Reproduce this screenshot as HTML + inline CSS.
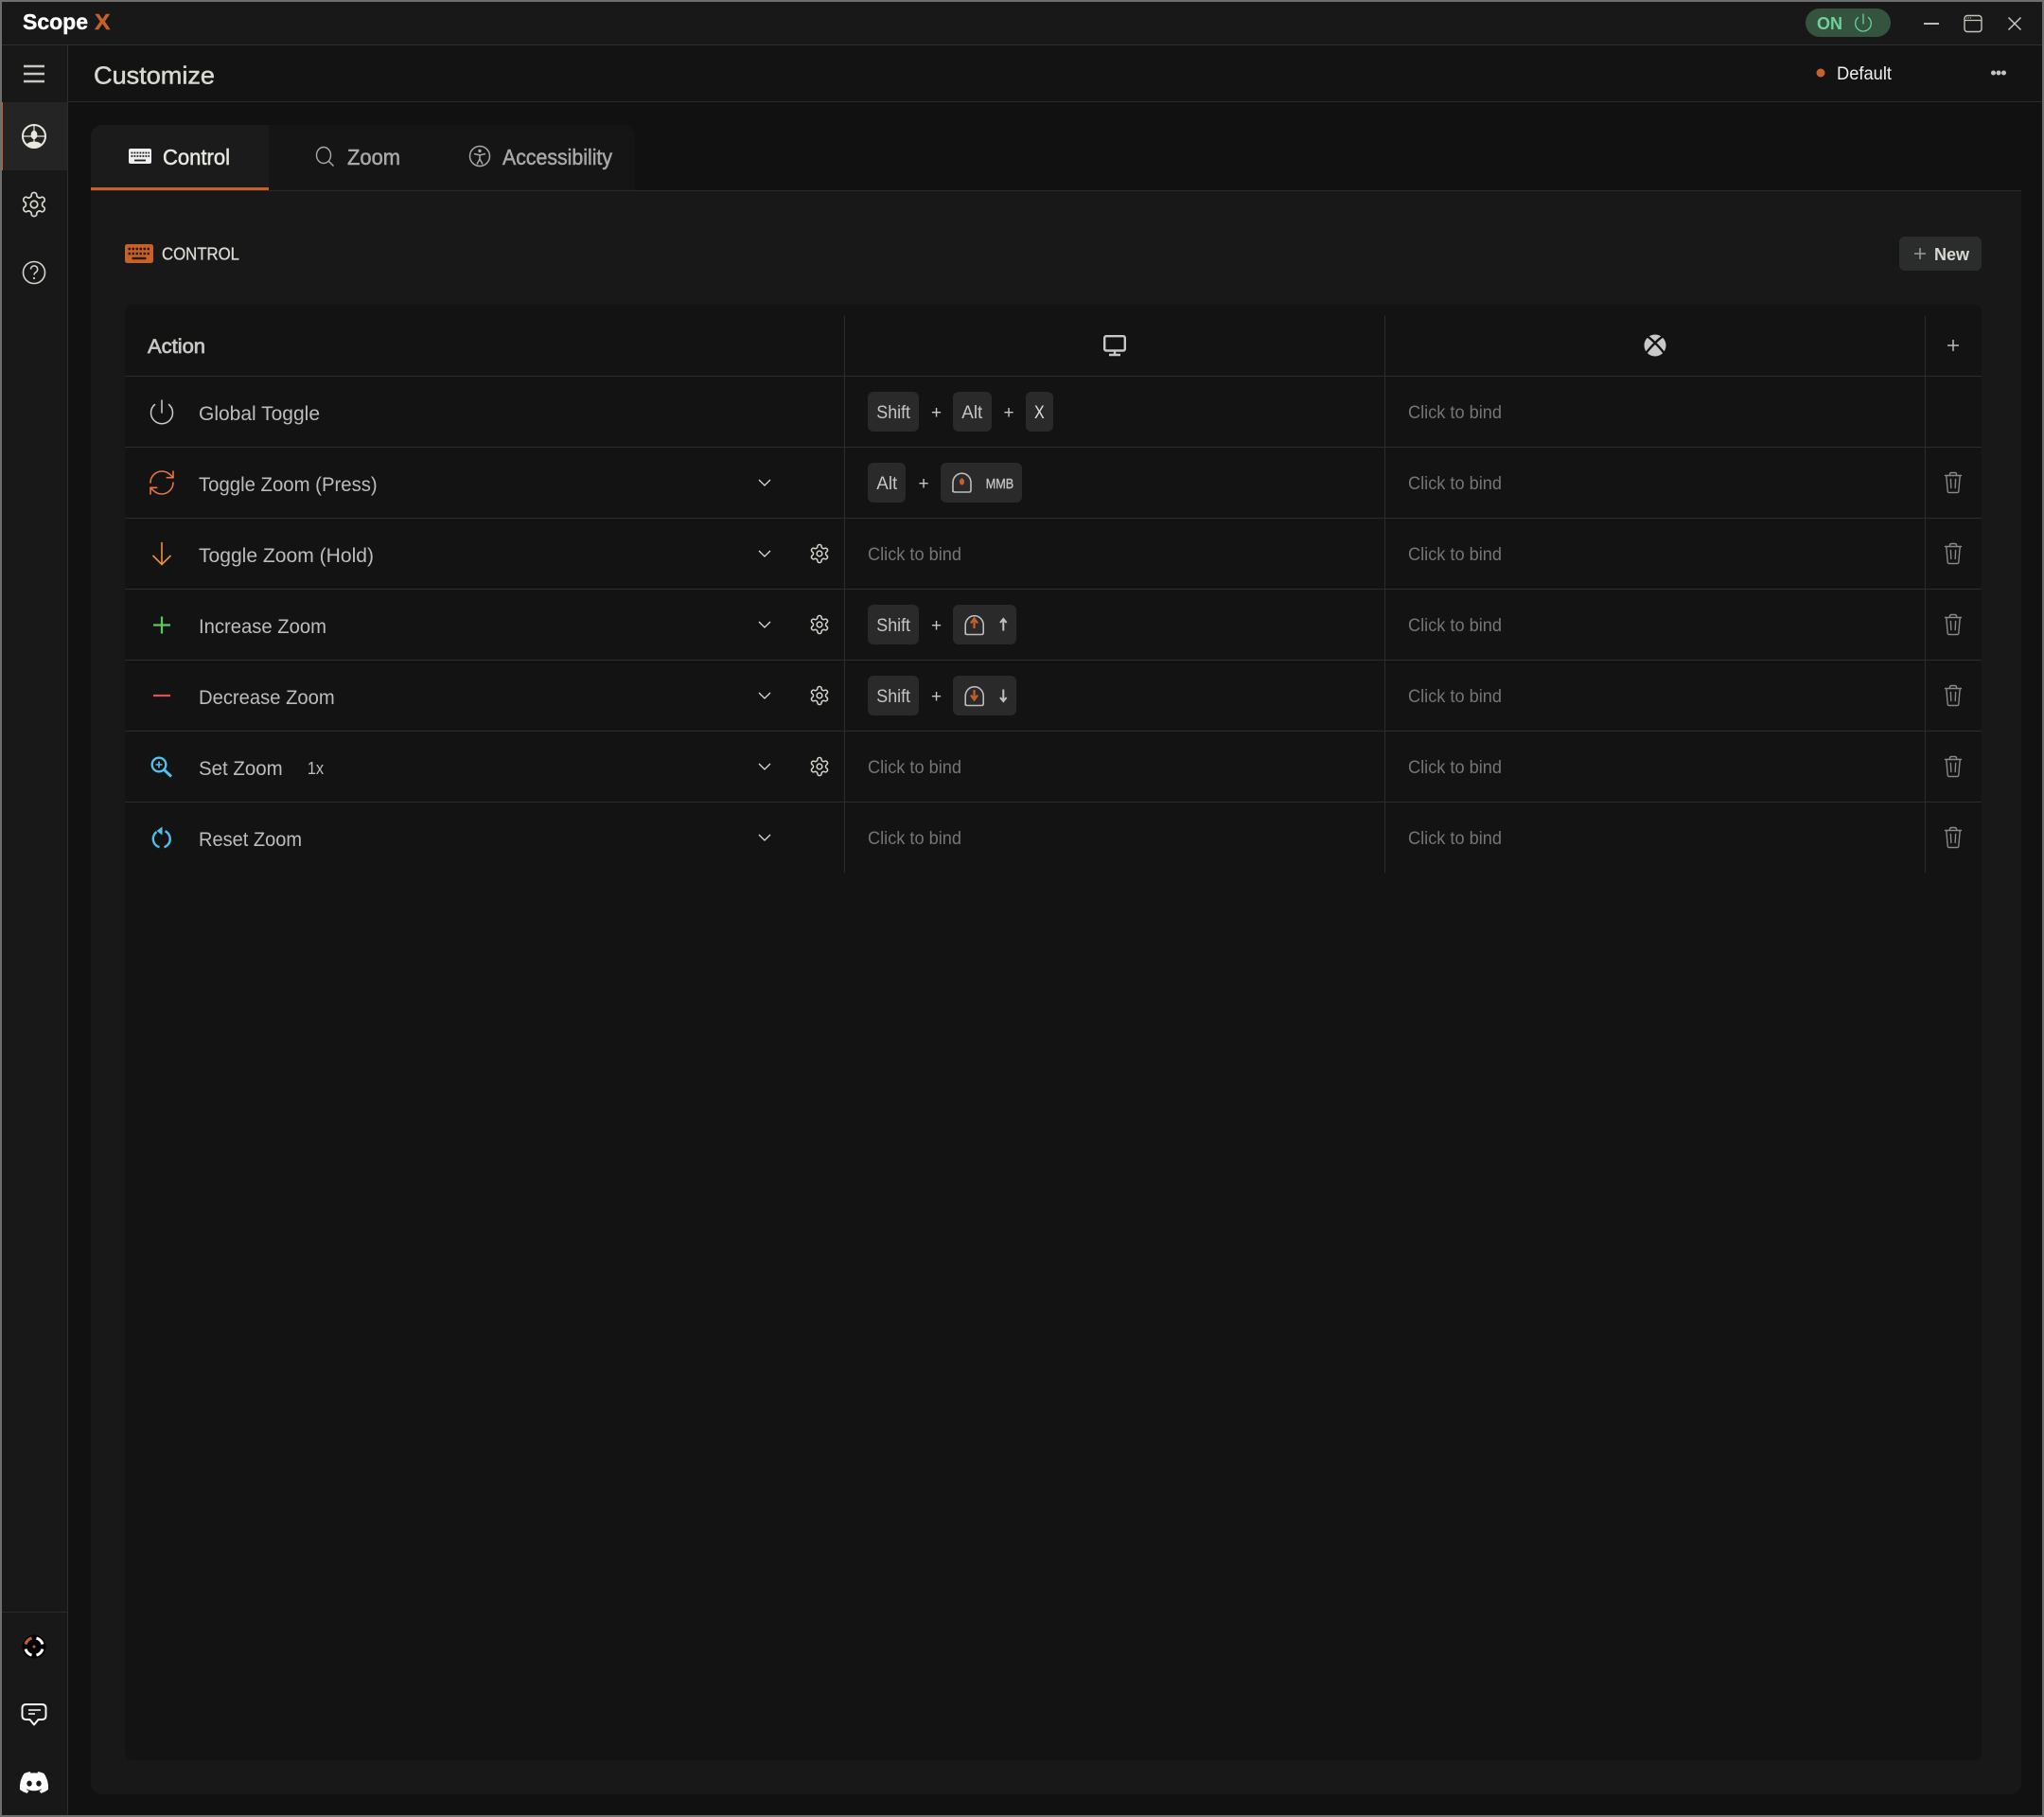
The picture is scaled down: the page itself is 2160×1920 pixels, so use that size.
<!DOCTYPE html>
<html>
<head>
<meta charset="utf-8">
<title>Scope X - Customize</title>
<style>
html,body{margin:0;padding:0;background:#111;width:2160px;height:1920px;overflow:hidden}
svg{display:block}
text{font-family:"Liberation Sans",sans-serif}
.name{font-size:21px;fill:#bcbcbc}
.key{font-size:19.5px;fill:#c6c6c6}
.bind{font-size:19.5px;fill:#757575}
.plus{font-size:19px;fill:#c6c6c6}
.tab{font-size:23px}
</style>
</head>
<body>
<svg width="2160" height="1920" viewBox="0 0 2160 1920" xmlns="http://www.w3.org/2000/svg">
<defs>
  <g id="gear" fill="none" stroke-linejoin="round">
    <path d="M12.22 2h-.44a2 2 0 0 0-2 2v.18a2 2 0 0 1-1 1.73l-.43.25a2 2 0 0 1-2 0l-.15-.08a2 2 0 0 0-2.73.73l-.22.38a2 2 0 0 0 .73 2.73l.15.1a2 2 0 0 1 1 1.72v.51a2 2 0 0 1-1 1.74l-.15.09a2 2 0 0 0-.73 2.73l.22.38a2 2 0 0 0 2.73.73l.15-.08a2 2 0 0 1 2 0l.43.25a2 2 0 0 1 1 1.73V20a2 2 0 0 0 2 2h.44a2 2 0 0 0 2-2v-.18a2 2 0 0 1 1-1.73l.43-.25a2 2 0 0 1 2 0l.15.08a2 2 0 0 0 2.73-.73l.22-.39a2 2 0 0 0-.73-2.73l-.15-.08a2 2 0 0 1-1-1.74v-.5a2 2 0 0 1 1-1.74l.15-.09a2 2 0 0 0 .73-2.73l-.22-.38a2 2 0 0 0-2.73-.73l-.15.08a2 2 0 0 1-2 0l-.43-.25a2 2 0 0 1-1-1.73V4a2 2 0 0 0-2-2z"/>
    <circle cx="12" cy="12" r="3"/>
  </g>
  <g id="trash" fill="none" stroke="#888" stroke-width="1.4" stroke-linecap="round" stroke-linejoin="round">
    <path d="M-8.5 -7.5H8.5"/>
    <path d="M-7.2 -7.5L-5.8 9.2Q-5.6 10.5 -4.4 10.5H4.4Q5.6 10.5 5.8 9.2L7.2 -7.5"/>
    <path d="M-3.6 -7.5V-8.5Q-3.6 -10.5 -1.6 -10.5H1.6Q3.6 -10.5 3.6 -8.5V-7.5"/>
    <path d="M-2.6 -3.5L-2.2 5.5M2.6 -3.5L2.2 5.5"/>
  </g>
  <path id="chev" d="M-6 -3L0 3L6 -3" fill="none" stroke="#dcdcdc" stroke-width="1.3"/>
  <g id="mouse">
    <path d="M-9.5 10V0A9.5 9.8 0 0 1 9.5 0V8Q9.5 10 7.5 10H-7.5Q-9.5 10 -9.5 8Z" fill="none" stroke="#bdbdbd" stroke-width="1.6"/>
  </g>
</defs>

<!-- window frame -->
<rect width="2160" height="1920" fill="#6e6e6e"/>
<rect x="2" y="2" width="2156" height="1916" fill="#111111"/>

<!-- title bar -->
<rect x="2" y="2" width="2156" height="45" fill="#181818"/>
<rect x="2" y="47" width="2156" height="1" fill="#2d2d2d"/>
<text x="24" y="31" font-size="23.5" font-weight="700" fill="#ffffff" stroke="#ffffff" stroke-width=".4" textLength="69" lengthAdjust="spacingAndGlyphs">Scope</text>
<text x="100" y="31" font-size="23.5" font-weight="700" fill="#c8602a" stroke="#c8602a" stroke-width=".4" textLength="16.5" lengthAdjust="spacingAndGlyphs">X</text>

<rect x="1908" y="9" width="90" height="30" rx="15" fill="#355440"/>
<text x="1920" y="31" font-size="18.5" font-weight="700" fill="#6fd09a" textLength="27" lengthAdjust="spacingAndGlyphs">ON</text>
<path d="M1963.5 18.5A8.3 8.3 0 1 0 1974.5 18.5M1969 15V25" fill="none" stroke="#6fd09a" stroke-width="1.3" stroke-linecap="round"/>

<rect x="2033" y="24" width="16" height="2" fill="#bdbdb5"/>
<rect x="2076" y="16.5" width="18" height="17" rx="3" fill="none" stroke="#c4c4bc" stroke-width="1.4"/>
<path d="M2076 21.5H2094" stroke="#c4c4bc" stroke-width="1.2"/>
<path d="M2078 19H2083" stroke="#8e8e88" stroke-width="1.6" stroke-dasharray="1 1"/>
<path d="M2122.5 18.5L2135.5 31.5M2135.5 18.5L2122.5 31.5" stroke="#c8c8c0" stroke-width="1.5"/>

<!-- sidebar -->
<rect x="2" y="48" width="69" height="1870" fill="#181818"/>
<rect x="71" y="48" width="1" height="1870" fill="#2d2d2d"/>
<rect x="2" y="108" width="69" height="72" fill="#242424"/>
<rect x="2" y="108" width="1" height="72" fill="#c8602a"/>
<rect x="2" y="1703" width="69" height="1" fill="#2b2b2b"/>
<path d="M25 70H47M25 78H47M25 86H47" stroke="#c8c8c0" stroke-width="2.4"/>

<circle cx="36" cy="144" r="12" fill="none" stroke="#e8e8dc" stroke-width="2"/>
<path d="M36 132V156M24 144H48" stroke="#e8e8dc" stroke-width="1.2"/>
<ellipse cx="36" cy="142.5" rx="3.4" ry="4.6" fill="#e8e8dc"/>
<path d="M27.5 153a12 12 0 0 0 17 0q-3 -3.5 -8.5 -3.5t-8.5 3.5z" fill="#e8e8dc"/>

<use href="#gear" stroke="#d4d4cc" stroke-width="1.4" transform="translate(21 201) scale(1.25)"/>

<circle cx="36" cy="288" r="11.5" fill="none" stroke="#d4d4cc" stroke-width="1.6"/>
<path d="M32.5 284.5a3.6 3.6 0 1 1 5.6 3c-1.3 .9 -2 1.5 -2 3" fill="none" stroke="#d4d4cc" stroke-width="1.5"/>
<circle cx="36" cy="294" r="1.1" fill="#d4d4cc"/>

<!-- sidebar bottom icons -->
<circle cx="36" cy="1740" r="12.5" fill="#000"/>
<g fill="none" stroke-width="3">
  <path d="M27 1737.5A9.5 9.5 0 0 1 33.5 1731" stroke="#c8602a"/>
  <path d="M38.5 1731A9.5 9.5 0 0 1 45 1737.5" stroke="#fff"/>
  <path d="M45 1742.5A9.5 9.5 0 0 1 38.5 1749" stroke="#fff"/>
  <path d="M33.5 1749A9.5 9.5 0 0 1 27 1742.5" stroke="#fff"/>
</g>
<circle cx="36" cy="1740" r="1.5" fill="#c8602a"/>

<path d="M28 1801H44Q48.5 1801 48.5 1805V1813Q48.5 1817 44 1817H40.5L36 1822.5L31.5 1817H28Q23.5 1817 23.5 1813V1805Q23.5 1801 28 1801Z" fill="none" stroke="#fff" stroke-width="1.9" stroke-linejoin="round"/>
<path d="M30 1807H43M30 1811H37" stroke="#fff" stroke-width="1.6"/>

<g transform="translate(21 1868.5) scale(1.25)">
<path fill="#fff" d="M20.317 4.3698a19.7913 19.7913 0 00-4.8851-1.5152.0741.0741 0 00-.0785.0371c-.211.3753-.4447.8648-.6083 1.2495-1.8447-.2762-3.68-.2762-5.4868 0-.1636-.3933-.4058-.8742-.6177-1.2495a.077.077 0 00-.0785-.037 19.7363 19.7363 0 00-4.8852 1.515.0699.0699 0 00-.0321.0277C.5334 9.0458-.319 13.5799.0992 18.0578a.0824.0824 0 00.0312.0561c2.0528 1.5076 4.0413 2.4228 5.9929 3.0294a.0777.0777 0 00.0842-.0276c.4616-.6304.8731-1.2952 1.226-1.9942a.076.076 0 00-.0416-.1057c-.6528-.2476-1.2743-.5495-1.8722-.8923a.077.077 0 01-.0076-.1277c.1258-.0943.2517-.1923.3718-.2914a.0743.0743 0 01.0776-.0105c3.9278 1.7933 8.18 1.7933 12.0614 0a.0739.0739 0 01.0785.0095c.1202.099.246.1981.3728.2924a.077.077 0 01-.0066.1276 12.2986 12.2986 0 01-1.873.8914.0766.0766 0 00-.0407.1067c.3604.698.7719 1.3628 1.225 1.9932a.076.076 0 00.0842.0286c1.961-.6067 3.9495-1.5219 6.0023-3.0294a.077.077 0 00.0313-.0552c.5004-5.177-.8382-9.6739-3.5485-13.6604a.061.061 0 00-.0312-.0286zM8.02 15.3312c-1.1825 0-2.1569-1.0857-2.1569-2.419 0-1.3332.9555-2.4189 2.157-2.4189 1.2108 0 2.1757 1.0952 2.1568 2.419 0 1.3332-.9555 2.4189-2.1569 2.4189zm7.9748 0c-1.1825 0-2.1569-1.0857-2.1569-2.419 0-1.3332.9554-2.4189 2.1569-2.4189 1.2108 0 2.1757 1.0952 2.1568 2.419 0 1.3332-.946 2.4189-2.1568 2.4189Z"/>
</g>

<!-- page header -->
<rect x="72" y="48" width="2086" height="59" fill="#131313"/>
<rect x="72" y="107" width="2086" height="1" fill="#2b2b2b"/>
<text x="99" y="88.5" font-size="26" fill="#d8d8d0" stroke="#d8d8d0" stroke-width=".5" textLength="128" lengthAdjust="spacingAndGlyphs">Customize</text>
<circle cx="1924" cy="77" r="4.5" fill="#c8602a"/>
<text x="1941" y="84" font-size="19.5" fill="#f0f0f0" textLength="58" lengthAdjust="spacingAndGlyphs">Default</text>
<circle cx="2106.5" cy="77" r="2.5" fill="#c4c4c4"/>
<circle cx="2112" cy="77" r="2.5" fill="#c4c4c4"/>
<circle cx="2117.5" cy="77" r="2.5" fill="#c4c4c4"/>

<!-- panel -->
<path d="M96 201H2136V1884a12 12 0 0 1 -12 12H108a12 12 0 0 1 -12 -12Z" fill="#181818"/>
<path d="M96 201V144a12 12 0 0 1 12 -12H659a12 12 0 0 1 12 12V201Z" fill="#151515"/>
<path d="M96 201V144a12 12 0 0 1 12 -12H284V201Z" fill="#1b1b1b"/>
<rect x="96" y="201" width="2040" height="1" fill="#2a2a2a"/>
<rect x="96" y="198" width="188" height="3" fill="#c8602a"/>

<!-- tabs -->
<rect x="136" y="157" width="24" height="16" rx="2" fill="#eeeeee"/>
<path d="M138.5 161.5H158M138.5 165H158" stroke="#1b1b1b" stroke-width="1.8" stroke-dasharray="1.8 1.2"/>
<path d="M142 169.5H154" stroke="#1b1b1b" stroke-width="1.8"/>
<text class="tab" x="172" y="174" fill="#e8e8e0" stroke="#e8e8e0" stroke-width=".5" textLength="71" lengthAdjust="spacingAndGlyphs">Control</text>

<ellipse cx="342" cy="164" rx="7.5" ry="8.5" fill="none" stroke="#a8a8a8" stroke-width="1.4"/>
<path d="M347.5 170.5L352.5 175.5" stroke="#a8a8a8" stroke-width="1.5"/>
<text class="tab" x="367" y="174" fill="#a8a8a8" stroke="#a8a8a8" stroke-width=".5" textLength="56" lengthAdjust="spacingAndGlyphs">Zoom</text>

<circle cx="507" cy="165" r="10.5" fill="none" stroke="#a8a8a8" stroke-width="1.5"/>
<circle cx="507" cy="159.5" r="1.7" fill="#a8a8a8"/>
<path d="M501 162.5L507 164L513 162.5M507 164V168M507 168L504 173.5M507 168L510 173.5" fill="none" stroke="#a8a8a8" stroke-width="1.5"/>
<text class="tab" x="531" y="174" fill="#a8a8a8" stroke="#a8a8a8" stroke-width=".5" textLength="116" lengthAdjust="spacingAndGlyphs">Accessibility</text>

<!-- section header -->
<rect x="132" y="258" width="30" height="20" rx="2.5" fill="#c8602a"/>
<path d="M135.5 263H159M135.5 268H159" stroke="#2a1a10" stroke-width="2.4" stroke-dasharray="2.5 1.5"/>
<path d="M139.5 273H154.5" stroke="#2a1a10" stroke-width="2.4"/>
<text x="171" y="274.5" font-size="18.5" fill="#dcdcd6" stroke="#dcdcd6" stroke-width=".3" textLength="82" lengthAdjust="spacingAndGlyphs">CONTROL</text>

<rect x="2007" y="250" width="87" height="36" rx="6" fill="#2b2d2d"/>
<path d="M2023 268H2035M2029 262V274" stroke="#9c9c98" stroke-width="1.5"/>
<text x="2044" y="275" font-size="18.5" font-weight="700" fill="#d8d8d0" textLength="37" lengthAdjust="spacingAndGlyphs">New</text>

<!-- table -->
<rect x="132" y="322" width="1962" height="1538" rx="6" fill="#131313"/>
<g fill="#2c2c2c">
  <rect x="132" y="397" width="1962" height="1"/>
  <rect x="132" y="472" width="1962" height="1"/>
  <rect x="132" y="547" width="1962" height="1"/>
  <rect x="132" y="622" width="1962" height="1"/>
  <rect x="132" y="697" width="1962" height="1"/>
  <rect x="132" y="772" width="1962" height="1"/>
  <rect x="132" y="847" width="1962" height="1"/>
  <rect x="892" y="334" width="1" height="588"/>
  <rect x="1463" y="334" width="1" height="588"/>
  <rect x="2034" y="334" width="1" height="588"/>
</g>

<!-- header row -->
<text x="156" y="373" font-size="21" fill="#c8c8c4" stroke="#c8c8c4" stroke-width=".7" textLength="61" lengthAdjust="spacingAndGlyphs">Action</text>
<rect x="1167.2" y="355.2" width="21.6" height="15.3" rx="1.8" fill="none" stroke="#c8c8c8" stroke-width="2.4"/>
<path d="M1178 371V374.5M1172 375H1184" stroke="#c8c8c8" stroke-width="2.4"/>
<circle cx="1749" cy="365" r="11.5" fill="#c8c8c8"/>
<path d="M1741 355.5Q1746 359 1749 362.5Q1752 359 1757 355.5M1739.500 373Q1745 366 1749 362.5Q1753 366 1758.500 373" fill="none" stroke="#131313" stroke-width="2.4"/>
<path d="M2058 365H2070M2064 359V371" stroke="#bdbdbd" stroke-width="1.5"/>

<!-- row labels -->
<text class="name" x="210" y="444" textLength="128" lengthAdjust="spacingAndGlyphs">Global Toggle</text>
<text class="name" x="210" y="519" textLength="188.7" lengthAdjust="spacingAndGlyphs">Toggle Zoom (Press)</text>
<text class="name" x="210" y="594" textLength="185" lengthAdjust="spacingAndGlyphs">Toggle Zoom (Hold)</text>
<text class="name" x="210" y="669" textLength="135" lengthAdjust="spacingAndGlyphs">Increase Zoom</text>
<text class="name" x="210" y="744" textLength="143.7" lengthAdjust="spacingAndGlyphs">Decrease Zoom</text>
<text class="name" x="210" y="819" textLength="88.7" lengthAdjust="spacingAndGlyphs">Set Zoom</text>
<text x="324.7" y="818" font-size="18.5" fill="#bcbcbc" textLength="17.5" lengthAdjust="spacingAndGlyphs">1x</text>
<text class="name" x="210" y="894" textLength="109" lengthAdjust="spacingAndGlyphs">Reset Zoom</text>

<!-- row icons -->
<path d="M163.5 427.5A11.5 11.5 0 1 0 178.5 427.5M171 423V436" fill="none" stroke="#cccccc" stroke-width="1.5" stroke-linecap="round"/>
<g transform="translate(155 494) scale(1.333)" fill="none" stroke="#e8743a" stroke-width="1.2" stroke-linecap="round" stroke-linejoin="round">
  <path d="M3 12a9 9 0 0 1 9-9 9.75 9.75 0 0 1 6.74 2.74L21 8"/>
  <path d="M21 3v5h-5"/>
  <path d="M21 12a9 9 0 0 1-9 9 9.75 9.75 0 0 1-6.74-2.74L3 16"/>
  <path d="M8 16H3v5"/>
</g>
<path d="M171 573V596.5M161.5 587L171 596.5L180.5 587" fill="none" stroke="#ee9040" stroke-width="1.6"/>
<path d="M162 660.5H180M171 651.5V669.5" stroke="#5ec860" stroke-width="2.2"/>
<path d="M162 735H180" stroke="#e05050" stroke-width="2.2"/>
<circle cx="168" cy="808" r="7.3" fill="none" stroke="#4fc0f0" stroke-width="2.4"/>
<path d="M173.5 813.5L181 820.5" stroke="#4fc0f0" stroke-width="3"/>
<path d="M168 804.5V811.5M164.500 808H171.500" stroke="#4fc0f0" stroke-width="1.6"/>
<path d="M174.5 878.2A9.2 9.2 0 0 1 173.5 895.2M168.500 895.2A9.2 9.2 0 0 1 165.500 879" fill="none" stroke="#4fc0f0" stroke-width="2.4"/>
<path d="M171.5 873.500V882.500L165.500 878Z" fill="#4fc0f0"/>

<!-- chevrons -->
<use href="#chev" x="808" y="510"/>
<use href="#chev" x="808" y="585"/>
<use href="#chev" x="808" y="660"/>
<use href="#chev" x="808" y="735"/>
<use href="#chev" x="808" y="810"/>
<use href="#chev" x="808" y="885"/>

<!-- gears -->
<use href="#gear" stroke="#d4d4cc" stroke-width="1.6" transform="translate(854.6 573.6) scale(.95)"/>
<use href="#gear" stroke="#d4d4cc" stroke-width="1.6" transform="translate(854.6 648.6) scale(.95)"/>
<use href="#gear" stroke="#d4d4cc" stroke-width="1.6" transform="translate(854.6 723.6) scale(.95)"/>
<use href="#gear" stroke="#d4d4cc" stroke-width="1.6" transform="translate(854.6 798.6) scale(.95)"/>

<!-- keys -->
<g fill="#2a2a2a">
  <rect x="917" y="414" width="54" height="42" rx="6"/>
  <rect x="1007" y="414" width="41" height="42" rx="6"/>
  <rect x="1084" y="414" width="29" height="42" rx="6"/>
  <rect x="917" y="489" width="40" height="42" rx="6"/>
  <rect x="994" y="489" width="86" height="42" rx="6"/>
  <rect x="917" y="639" width="54" height="42" rx="6"/>
  <rect x="1007" y="639" width="67" height="42" rx="6"/>
  <rect x="917" y="714" width="54" height="42" rx="6"/>
  <rect x="1007" y="714" width="67" height="42" rx="6"/>
</g>
<text class="key" x="926.3" y="442" textLength="35.7" lengthAdjust="spacingAndGlyphs">Shift</text>
<text class="plus" x="984" y="442">+</text>
<text class="key" x="1016.3" y="442" textLength="22" lengthAdjust="spacingAndGlyphs">Alt</text>
<text class="plus" x="1060.5" y="442">+</text>
<text class="key" x="1093" y="442" textLength="10.7" lengthAdjust="spacingAndGlyphs" style="fill:#e0e0e0">X</text>

<text class="key" x="926.3" y="517" textLength="22" lengthAdjust="spacingAndGlyphs">Alt</text>
<text class="plus" x="970.5" y="517">+</text>
<use href="#mouse" x="1016.5" y="510"/>
<ellipse cx="1016.5" cy="509" rx="2.5" ry="3.5" fill="#c8602a"/>
<text x="1041.7" y="516" font-size="15" fill="#c0c0c0" stroke="#c0c0c0" stroke-width=".4" textLength="29.5" lengthAdjust="spacingAndGlyphs">MMB</text>

<text class="key" x="926.3" y="667" textLength="35.7" lengthAdjust="spacingAndGlyphs">Shift</text>
<text class="plus" x="984" y="667">+</text>
<use href="#mouse" x="1029.7" y="660.5"/>
<path d="M1029.5 664V656M1026 658.5L1029.5 653.5L1033 658.5" fill="none" stroke="#c8602a" stroke-width="2.2"/>
<path d="M1060.3 666.5V655M1057 658L1060.3 654L1063.6 658" fill="none" stroke="#c0c0c0" stroke-width="2"/>

<text class="key" x="926.3" y="742" textLength="35.7" lengthAdjust="spacingAndGlyphs">Shift</text>
<text class="plus" x="984" y="742">+</text>
<use href="#mouse" x="1029.7" y="735.5"/>
<path d="M1029.5 729V737M1026 734.5L1029.5 739.5L1033 734.5" fill="none" stroke="#c8602a" stroke-width="2.2"/>
<path d="M1060.3 728.5V740M1057 737L1060.3 741L1063.6 737" fill="none" stroke="#c0c0c0" stroke-width="2"/>

<!-- click to bind: first col -->
<text class="bind" x="917" y="592" textLength="99" lengthAdjust="spacingAndGlyphs">Click to bind</text>
<text class="bind" x="917" y="817" textLength="99" lengthAdjust="spacingAndGlyphs">Click to bind</text>
<text class="bind" x="917" y="892" textLength="99" lengthAdjust="spacingAndGlyphs">Click to bind</text>

<!-- click to bind: second col -->
<text class="bind" x="1488" y="442" textLength="99" lengthAdjust="spacingAndGlyphs">Click to bind</text>
<text class="bind" x="1488" y="517" textLength="99" lengthAdjust="spacingAndGlyphs">Click to bind</text>
<text class="bind" x="1488" y="592" textLength="99" lengthAdjust="spacingAndGlyphs">Click to bind</text>
<text class="bind" x="1488" y="667" textLength="99" lengthAdjust="spacingAndGlyphs">Click to bind</text>
<text class="bind" x="1488" y="742" textLength="99" lengthAdjust="spacingAndGlyphs">Click to bind</text>
<text class="bind" x="1488" y="817" textLength="99" lengthAdjust="spacingAndGlyphs">Click to bind</text>
<text class="bind" x="1488" y="892" textLength="99" lengthAdjust="spacingAndGlyphs">Click to bind</text>

<!-- trash -->
<use href="#trash" x="2064" y="510"/>
<use href="#trash" x="2064" y="585"/>
<use href="#trash" x="2064" y="660"/>
<use href="#trash" x="2064" y="735"/>
<use href="#trash" x="2064" y="810"/>
<use href="#trash" x="2064" y="885"/>
</svg>
</body>
</html>
